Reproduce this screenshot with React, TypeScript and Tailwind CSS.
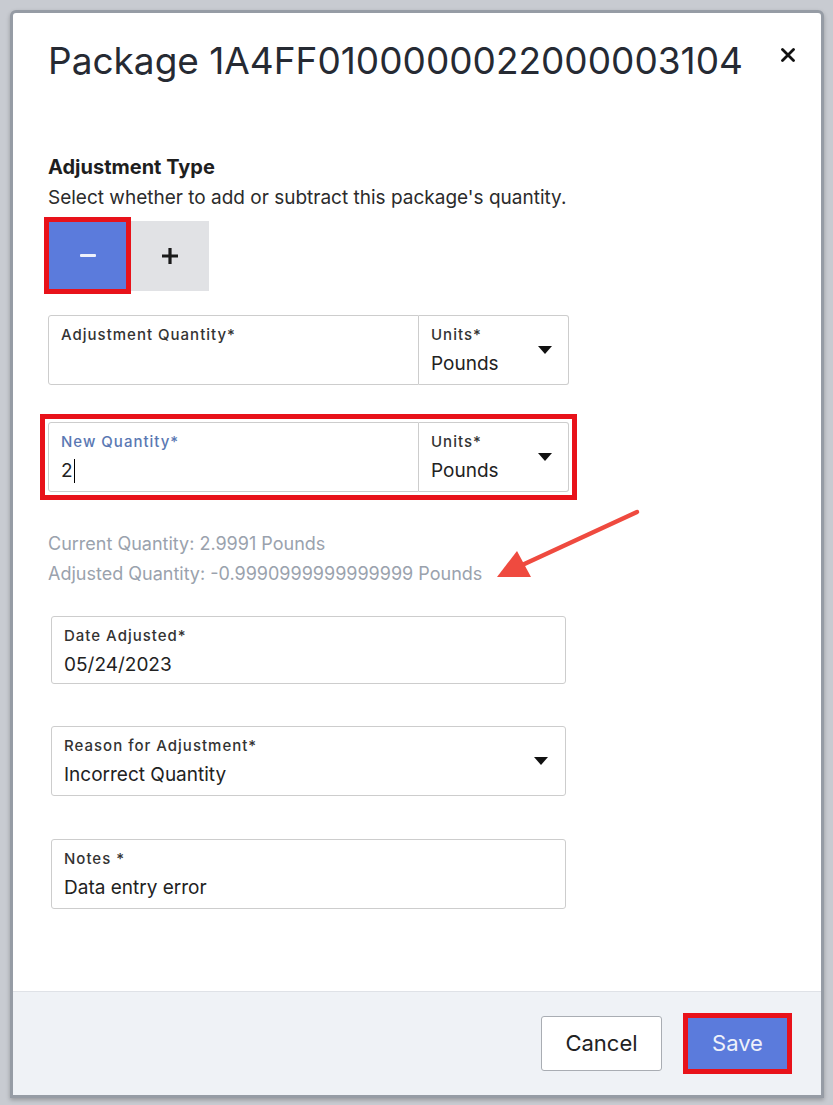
import React from "react";

const font = { fontFamily: "Inter, 'Noto Sans', sans-serif" };

function Caret() {
  return (
    <svg width="14" height="8" viewBox="0 0 14 8" className="shrink-0">
      <path d="M0 0 H14 L7 8 Z" fill="#111" />
    </svg>
  );
}

function Field({
  label,
  value,
  labelClass = "text-[#333]",
  className = "",
  select = false,
  cursor = false,
}: {
  label: string;
  value?: string;
  labelClass?: string;
  className?: string;
  select?: boolean;
  cursor?: boolean;
}) {
  return (
    <div className={`h-[70px] border border-[#cdcdcd] bg-white flex items-center pl-[12px] pr-[16px] ${className}`}>
      <div className="flex-1 flex flex-col self-stretch pt-[9px]">
        <span className={`text-[15px] leading-[20px] font-medium tracking-[1px] ${labelClass}`}>{label}</span>
        <span className="text-[19px] leading-[28px] mt-[5px] text-[#222] flex items-center">
          {value}
          {cursor && <span className="inline-block w-[1.5px] h-[24px] bg-black ml-[1px]" />}
        </span>
      </div>
      {select && <Caret />}
    </div>
  );
}

export default function App() {
  return (
    <div className="min-h-[1105px] bg-[#c8cbd1] pt-[10px] px-[10px] pb-[8px]" style={font}>
      <div className="w-[814px] border-[3px] border-[#969ca5] rounded-t-[6px] bg-white shadow-[0_2px_4px_rgba(0,0,0,0.25)] overflow-hidden">
        <div className="relative pl-[35px] pr-[26px]">
          <div className="flex items-start justify-between pt-[25px]">
            <h1 className="text-[37px] leading-[46px] text-[#262a33]">
              Package 1A4FF0100000022000003104
            </h1>
            <svg width="14" height="14" viewBox="0 0 14 14" className="mt-[10px]">
              <path d="M1.5 1.5 L12.5 12.5 M12.5 1.5 L1.5 12.5" stroke="#111" strokeWidth="2.8" strokeLinecap="round" />
            </svg>
          </div>

          <div className="mt-[71px]">
            <div className="text-[20px] leading-[24px] font-bold text-[#1e1e1e]">Adjustment Type</div>
            <div className="text-[19px] leading-[24px] text-[#2b2b2b] mt-[7px]">
              Select whether to add or subtract this package's quantity.
            </div>
          </div>

          <div className="flex items-center mt-[7px] ml-[-4px]">
            <div className="w-[87px] h-[77px] border-[5px] border-[#e8121a] bg-[#5b7bdc] flex items-center justify-center">
              <span className="w-[16px] h-[3.5px] bg-[#eef1fb] rounded-[1px]" />
            </div>
            <div className="w-[78px] h-[70px] bg-[#e1e2e5] flex items-center justify-center">
              <svg width="18" height="18" viewBox="0 0 18 18">
                <path d="M9 1 V17 M1 9 H17" stroke="#1a1a1a" strokeWidth="3.2" />
              </svg>
            </div>
          </div>

          <div className="flex mt-[21px]">
            <Field label="Adjustment Quantity*" className="w-[371px] rounded-l-[3px]" />
            <Field label="Units*" value="Pounds" select className="w-[150px] rounded-r-[3px] border-l-0" />
          </div>

          <div className="mt-[29px] ml-[-8px] w-[537px] border-[5px] border-[#e8121a] p-[3px]">
            <div className="flex">
              <Field label="New Quantity*" value="2" cursor labelClass="text-[#5a78b3]" className="w-[371px] rounded-l-[3px]" />
              <Field label="Units*" value="Pounds" select className="w-[150px] rounded-r-[3px] border-l-0" />
            </div>
          </div>

          <div className="mt-[29px] text-[18px] leading-[30px] text-[#9aa2ad]">
            <div>Current Quantity: 2.9991 Pounds</div>
            <div>Adjusted Quantity: -0.9990999999999999 Pounds</div>
          </div>

          <svg className="absolute left-[477px] top-[485px]" width="160" height="90" viewBox="0 0 160 90">
            <path d="M147 14 L30 68" stroke="#ef4a3f" strokeWidth="4.5" strokeLinecap="round" />
            <path d="M7 79 L27 53 L41 79 Z" fill="#ef4a3f" />
          </svg>

          <div className="ml-[3px] mt-[27px] w-[515px] flex flex-col">
            <Field label="Date Adjusted*" value="05/24/2023" className="rounded-[3px] !h-[68px]" />
            <Field label="Reason for Adjustment*" value="Incorrect Quantity" select className="rounded-[3px] mt-[42px] pr-[17px]" />
            <Field label="Notes *" value="Data entry error" className="rounded-[3px] mt-[43px]" />
          </div>
          <div className="h-[82px]" />
        </div>

        <div className="h-[104px] bg-[#eff2f6] border-t border-[#dfe2e7] flex items-center justify-end pr-[29px]">
          <button className="w-[121px] h-[55px] bg-white border border-[#a9adb3] rounded-[3px] text-[22px] text-[#222]">
            Cancel
          </button>
          <div className="ml-[21px] w-[109px] h-[61px] border-[5px] border-[#e8121a] bg-[#5b7bdc] flex items-center justify-center text-[22px] text-[#eef1fa]">
            Save
          </div>
        </div>
      </div>
    </div>
  );
}
